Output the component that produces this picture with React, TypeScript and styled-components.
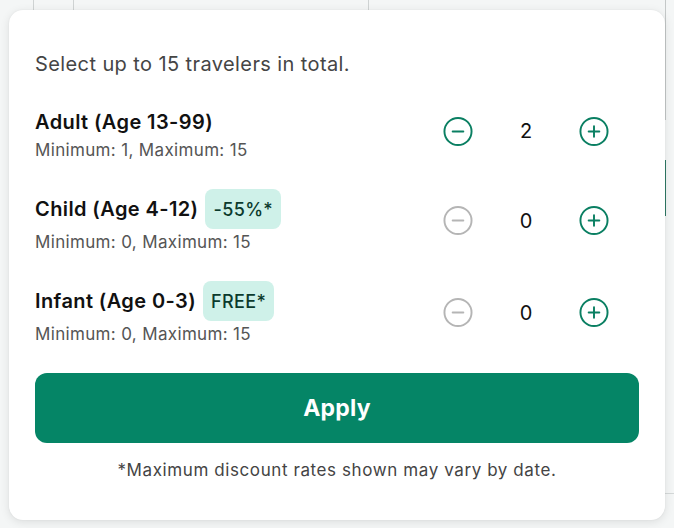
import React, { useState } from "react";
import styled, { createGlobalStyle } from "styled-components";

const Global = createGlobalStyle`
  html, body { margin: 0; padding: 0; }
  body {
    background: #f4f6f6;
    font-family: Inter, "Noto Sans", "Liberation Sans", sans-serif;
    width: 674px;
    height: 528px;
    overflow: hidden;
    position: relative;
  }
  * { box-sizing: border-box; }
`;

const Backdrop = styled.div`
  position: absolute;
  inset: 0;
  z-index: 0;
  pointer-events: none;
`;

const VLine = styled.div<{ $x: number; $top: number; $h: number; $c: string }>`
  position: absolute;
  left: ${(p) => p.$x}px;
  top: ${(p) => p.$top}px;
  width: 1px;
  height: ${(p) => p.$h}px;
  background: ${(p) => p.$c};
`;

const HLine = styled.div<{ $y: number; $x: number; $w: number }>`
  position: absolute;
  left: ${(p) => p.$x}px;
  top: ${(p) => p.$y}px;
  height: 1px;
  width: ${(p) => p.$w}px;
  background: #d4d8d8;
`;

const Stage = styled.div`
  position: relative;
  z-index: 1;
  padding: 10px 9px 8px 9px;
`;

const Card = styled.div`
  width: 656px;
  height: 510px;
  background: #fff;
  border-radius: 14px;
  box-shadow: 0 2px 10px rgba(0, 0, 0, 0.1), 0 0 2px rgba(0, 0, 0, 0.06);
  padding: 42px 26px 0 26px;
  display: flex;
  flex-direction: column;
`;

const Intro = styled.p`
  margin: 0;
  font-size: 20px;
  line-height: 24px;
  letter-spacing: 0.02em;
  color: #454545;
`;

const List = styled.div`
  margin-top: 34px;
  display: flex;
  flex-direction: column;
  gap: 29px;
`;

const Row = styled.div`
  display: flex;
  align-items: center;
  justify-content: space-between;
  padding-right: 30px;
`;

const Info = styled.div`
  display: flex;
  flex-direction: column;
`;

const TitleLine = styled.div`
  display: flex;
  align-items: center;
  gap: 7px;
`;

const Title = styled.span`
  font-size: 20px;
  line-height: 24px;
  font-weight: 600;
  color: #111;
  letter-spacing: 0.02em;
`;

const Badge = styled.span`
  display: inline-flex;
  align-items: center;
  height: 40px;
  padding: 0 8px;
  border-radius: 8px;
  background: #cff1e9;
  color: #0b3a2d;
  font-size: 18px;
  font-weight: 500;
  letter-spacing: 0.02em;
`;

const Limits = styled.span<{ $gap: number }>`
  margin-top: ${(p) => p.$gap}px;
  font-size: 17px;
  line-height: 20px;
  letter-spacing: 0.02em;
  color: #555;
`;

const Controls = styled.div<{ $shift: number }>`
  display: flex;
  align-items: center;
  margin-top: ${(p) => p.$shift}px;
`;

const RoundBtn = styled.button<{ $disabled?: boolean }>`
  width: 30px;
  height: 30px;
  padding: 0;
  border: none;
  background: none;
  display: flex;
  align-items: center;
  justify-content: center;
  color: ${(p) => (p.$disabled ? "#b5b5b5" : "#0a7f62")};
  cursor: ${(p) => (p.$disabled ? "default" : "pointer")};
`;

const Value = styled.span`
  width: 106px;
  text-align: center;
  font-size: 20px;
  color: #111;
`;

const ApplyBtn = styled.button`
  margin-top: 29px;
  height: 70px;
  width: 100%;
  border: none;
  border-radius: 12px;
  background: #058566;
  color: #fff;
  font-family: inherit;
  font-size: 23px;
  font-weight: 700;
  letter-spacing: 0.01em;
  cursor: pointer;
`;

const Note = styled.p`
  margin: 17px 0 0 0;
  text-align: center;
  font-size: 17px;
  line-height: 20px;
  letter-spacing: 0.035em;
  color: #444;
`;

const CircleIcon = ({ plus }: { plus?: boolean }) => (
  <svg width="31" height="31" viewBox="0 0 31 31" fill="none" stroke="currentColor" strokeWidth="2" strokeLinecap="round">
    <circle cx="15.5" cy="15.5" r="14" />
    <line x1="10" y1="15.5" x2="21" y2="15.5" />
    {plus && <line x1="15.5" y1="10" x2="15.5" y2="21" />}
  </svg>
);

type Traveler = {
  key: string;
  title: string;
  badge?: string;
  min: number;
  max: number;
  gap: number;
  shift: number;
};

const travelers: Traveler[] = [
  { key: "adult", title: "Adult (Age 13-99)", min: 1, max: 15, gap: 6, shift: -8 },
  { key: "child", title: "Child (Age 4-12)", badge: "-55%*", min: 0, max: 15, gap: 3, shift: 0 },
  { key: "infant", title: "Infant (Age 0-3)", badge: "FREE*", min: 0, max: 15, gap: 3, shift: 0 },
];

export default function App() {
  const [counts, setCounts] = useState<Record<string, number>>({ adult: 2, child: 0, infant: 0 });

  const change = (t: Traveler, d: number) =>
    setCounts((c) => {
      const next = Math.min(t.max, Math.max(t.min, c[t.key] + d));
      return { ...c, [t.key]: next };
    });

  return (
    <>
      <Global />
      <Backdrop>
        <VLine $x={33} $top={0} $h={12} $c="#cfd3d3" />
        <VLine $x={73} $top={0} $h={12} $c="#cfd3d3" />
        <VLine $x={368} $top={0} $h={12} $c="#cfd3d3" />
        <VLine $x={665} $top={0} $h={120} $c="#c4c8c8" />
        <VLine $x={665} $top={160} $h={56} $c="#2f7a66" />
        <HLine $x={665} $y={493} $w={9} />
      </Backdrop>
      <Stage>
        <Card>
          <Intro>Select up to 15 travelers in total.</Intro>
          <List>
            {travelers.map((t) => {
              const n = counts[t.key];
              return (
                <Row key={t.key}>
                  <Info>
                    <TitleLine>
                      <Title>{t.title}</Title>
                      {t.badge && <Badge>{t.badge}</Badge>}
                    </TitleLine>
                    <Limits $gap={t.gap}>
                      Minimum: {t.min}, Maximum: {t.max}
                    </Limits>
                  </Info>
                  <Controls $shift={t.shift}>
                    <RoundBtn $disabled={n <= t.min} onClick={() => change(t, -1)} aria-label="decrease">
                      <CircleIcon />
                    </RoundBtn>
                    <Value>{n}</Value>
                    <RoundBtn $disabled={n >= t.max} onClick={() => change(t, 1)} aria-label="increase">
                      <CircleIcon plus />
                    </RoundBtn>
                  </Controls>
                </Row>
              );
            })}
          </List>
          <ApplyBtn>Apply</ApplyBtn>
          <Note>*Maximum discount rates shown may vary by date.</Note>
        </Card>
      </Stage>
    </>
  );
}
